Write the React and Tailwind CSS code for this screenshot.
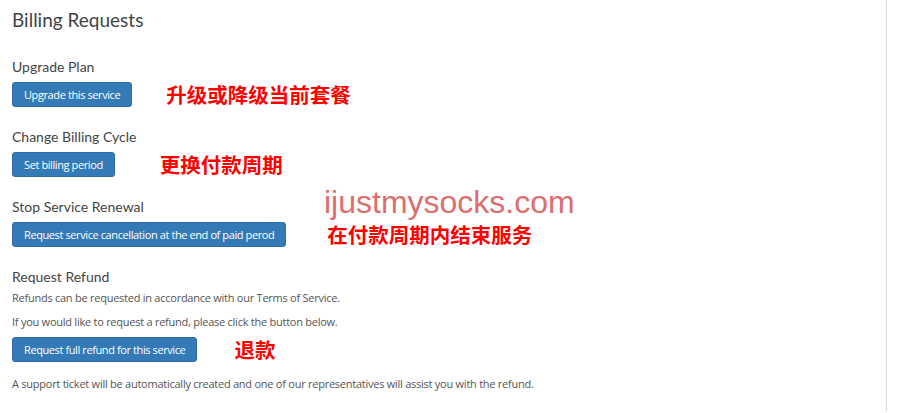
import React from "react";

const btn =
  "h-[25px] px-[11px] rounded-[3px] bg-[#337ab7] border border-[#2e6da4] text-white text-[11px] tracking-[-0.4px] leading-none flex items-center shrink-0";
const note =
  "text-[20.5px] leading-none font-bold text-[#ff0000] [font-family:'Noto_Sans_CJK_SC','Noto_Sans',sans-serif]";
const heading = "text-[14px] leading-[18px] text-[#444] [font-family:Lato,'Noto_Sans',sans-serif]";
const body = "text-[11px] tracking-[-0.25px] leading-[16px] text-[#555]";

export default function App() {
  return (
    <div className="relative w-[899px] h-[413px] bg-white overflow-hidden [font-family:'Open_Sans','Noto_Sans',sans-serif]">
      <div className="w-[887px] h-[412px] border-r border-[#d8d8d8] pl-[12px]">
        <h1 className="pt-[7px] text-[19px] leading-[26px] text-[#444] [font-family:Lato,'Noto_Sans',sans-serif]">
          Billing Requests
        </h1>

        <div className="mt-[25px]">
          <h2 className={heading}>Upgrade Plan</h2>
          <div className="mt-[6px] flex items-center gap-[34px]">
            <button className={btn}>Upgrade this service</button>
            <span className={note}>升级或降级当前套餐</span>
          </div>
        </div>

        <div className="mt-[21px]">
          <h2 className={heading}>Change Billing Cycle</h2>
          <div className="mt-[6px] flex items-center gap-[45px]">
            <button className={btn}>Set billing period</button>
            <span className={note}>更换付款周期</span>
          </div>
        </div>

        <div className="mt-[21px]">
          <h2 className={heading}>Stop Service Renewal</h2>
          <div className="mt-[6px] flex items-center gap-[41px]">
            <button className={btn}>Request service cancellation at the end of paid perod</button>
            <span className={note}>在付款周期内结束服务</span>
          </div>
        </div>

        <div className="mt-[21px]">
          <h2 className={heading}>Request Refund</h2>
          <p className={`${body} mt-[4px]`}>
            Refunds can be requested in accordance with our Terms of Service.
          </p>
          <p className={`${body} mt-[8px]`}>
            If you would like to request a refund, please click the button below.
          </p>
          <div className="mt-[7px] flex items-center gap-[37px]">
            <button className={btn}>Request full refund for this service</button>
            <span className={note}>退款</span>
          </div>
          <p className={`${body} mt-[14px]`}>
            A support ticket will be automatically created and one of our representatives will assist you with the refund.
          </p>
        </div>
      </div>

      <div className="absolute left-[324px] top-[186px] text-[32px] leading-none text-[#dc6e6e] [font-family:'Liberation_Sans',Arial,sans-serif] pointer-events-none">
        ijustmysocks.com
      </div>
    </div>
  );
}
